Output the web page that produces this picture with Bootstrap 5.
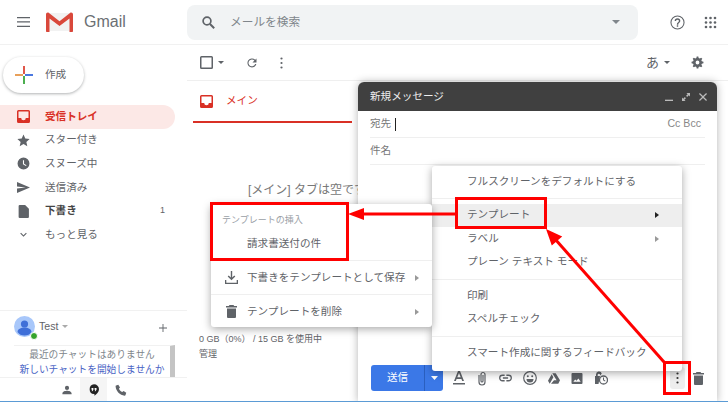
<!DOCTYPE html>
<html lang="ja">
<head>
  <meta charset="UTF-8">
  <meta name="viewport" content="width=device-width, initial-scale=1.0">
  <link href="https://cdn.jsdelivr.net/npm/bootstrap@5.3.0/dist/css/bootstrap.min.css" rel="stylesheet">
  <title>Gmail</title>
  <style>
    html, body { height: 100%; overflow: hidden; }
    body { font-family: "Liberation Sans", "Noto Sans CJK JP", sans-serif; color: #5f6368; font-size: 10.6px; background: #fff; }
    svg { display: block; flex: none; fill: currentColor; }
    .page { width: 728px; height: 402px; position: relative; border-bottom: 1px solid #5b9bd5; overflow: hidden; }
    .topbar { height: 45px; border-bottom: 1px solid #f1f1f1; }
    .burger { width: 46px; padding-left: 17px; }
    .gm-word { font-size: 16px; color: #6b6f73; margin-left: 11px; width: 103px; }
    .search { width: 451px; height: 35px; background: #f1f3f4; border-radius: 8px; padding: 0 18px 0 15px; font-size: 11.7px; color: #80868b; }
    .search-text { margin-left: 15px; }
    .top-right { margin-left: 31px; gap: 18px; color: #5f6368; }
    .side { width: 187px; height: 356px; }
    .compose-btn { width: 81px; height: 36px; margin: 12px 0 12px 3px; border-radius: 18px; box-shadow: 0 1px 3px rgba(60,64,67,.4); padding-left: 12px; gap: 12px; }
    .nav-line { width: 175px; height: 23.6px; padding-left: 17px; border-radius: 0 12px 12px 0; gap: 15px; color: #5f6368; }
    .nav-line.on { background: #fce8e6; color: #d93025; font-weight: 700; }
    .nav-line b { color: #444; }
    .nav-count { margin-left: auto; margin-right: 10px; font-size: 9px; }
    .chat-head { margin-top: auto; border-top: 1px solid #f1f1f1; height: 35px; padding: 5px 20px 0 14px; }
    .avatar { width: 21px; height: 21px; position: relative; }
    .dot-on { position: absolute; right: -3px; bottom: -3px; width: 8px; height: 8px; background: #34a32b; border-radius: 50%; border: 1px solid #fff; }
    .chat-name { margin-left: 4px; margin-top: 3px; }
    .chat-plus { margin-top: 8px; }
    .chat-none { height: 32px; margin-left: 14px; width: 161px; border-right: 5px solid #c4c4c4; border-top: 1px solid #f1f1f1; font-size: 9.7px; line-height: 15px; text-align: center; color: #80868b; white-space: nowrap; padding-top: 1px; }
    .chat-none a { color: #4a64c5; text-decoration: none; display: block; }
    .chat-tabs { height: 24px; border-top: 1px solid #f1f1f1; }
    .chat-tab { width: 27px; height: 24px; }
    .chat-tab.on { background: #f5f5f5; color: #222; }
    .mainpane { flex: 1; min-width: 0; }
    .tools { height: 36px; border-bottom: 1px solid #efefef; padding: 0 24px 0 13px; }
    .tools .t-caret { margin-left: 5px; }
    .tools .t-refresh { margin-left: 22px; }
    .tools .t-dots { margin-left: 22px; }
    .tools .t-lang { margin-left: auto; font-size: 13px; }
    .tools .t-gear { margin-left: 21px; }
    .tabline { width: 159px; height: 42px; margin-left: 6px; border-bottom: 2px solid #d93025; padding-left: 7px; gap: 13px; color: #d93025; }
    .empty-note { margin: 58px 0 0 61px; font-size: 12px; white-space: nowrap; color: #777; }
    .usage { position: absolute; left: 199px; top: 332px; font-size: 9px; line-height: 15px; }
    .cwin { position: absolute; left: 358px; top: 82px; width: 359px; height: 320px; background: #fff; border-radius: 6px 6px 0 0; box-shadow: 0 0 8px rgba(0,0,0,.3); }
    .cwin-head { height: 29px; background: #404040; color: #eee; border-radius: 6px 6px 0 0; padding: 0 10px 0 12px; }
    .cwin-head .ctl { gap: 9px; color: #bbb; }
    .field { height: 27px; margin: 0 12px; border-bottom: 1px solid #efefef; color: #777; }
    .cc-links { margin-left: auto; margin-right: 4px; color: #888; }
    .caretline { width: 1px; height: 13px; background: #222; margin-left: 4px; }
    .cwin-foot { position: absolute; left: 13px; right: 13px; top: 283px; height: 26px; }
    .send { width: 72px; height: 26px; background: #3b78e7; border-radius: 3px; color: #fff; }
    .send-l { flex: 1; border-right: 1px solid #2a5fbf; }
    .send-r { width: 18px; }
    .foot-icons { margin-left: 10px; gap: 11px; }
    .more-hover { margin-left: auto; width: 15px; height: 22px; background: #eee; border-radius: 3px; color: #333; }
    .pop { position: absolute; background: #fff; border-radius: 3px; box-shadow: 0 2px 8px rgba(0,0,0,.35); color: #5f6368; }
    .pop-main { left: 432px; top: 166px; width: 250px; height: 205px; padding-top: 4px; }
    .pop-sub { left: 211px; top: 204px; width: 221px; height: 123px; }
    .it { height: 23.5px; padding: 0 23px 0 35px; white-space: nowrap; }
    .it.hover { background: #eee; }
    .tri { margin-left: auto; width: 0; height: 0; border-left: 4px solid #999; border-top: 3px solid transparent; border-bottom: 3px solid transparent; }
    .it.hover .tri { border-left-color: #222; }
    .sep { height: 1px; background: #efefef; margin: 4.5px 0; }
    .sub-head { font-size: 9px; color: #9aa0a6; padding: 10px 0 0 11px; height: 27px; }
    .sub-it { height: 33px; padding: 0 13px 0 14px; gap: 9px; white-space: nowrap; }
    .sub-pick { height: 29px; padding: 0 0 4px 36px; }
    .sub-line { height: 1px; background: #efefef; }
    .mark-box { position: absolute; border: 3px solid #f00; }
    .mark-sub { left: 210px; top: 202px; width: 139px; height: 59px; }
    .mark-tpl { left: 455px; top: 197px; width: 92px; height: 32px; }
    .mark-more { left: 663px; top: 361px; width: 28px; height: 34px; }
    .arrows { position: absolute; left: 0; top: 0; }
  </style>
</head>
<body>
<div class="page">
  <!-- header -->
  <div class="topbar d-flex align-items-center">
    <div class="burger"><svg width="13" height="10" viewBox="0 0 13 10"><path d="M0 0h13v1.300H0zM0 4.300h13v1.300H0zM0 8.700h13V10H0z"/></svg></div>
    <svg width="27" height="20" viewBox="0 0 27 20">
      <path d="M1 1h25v18H1z" fill="#f2f2f2"/>
      <path d="M3 2l10.500 8L24 2v3l-10.500 8L3 5z" fill="#d8d8d8"/>
      <path d="M0 2.500C0 1 1.500 0 3 1l10.500 8.200L24 1c1.500-1 3 0 3 1.500V19c0 .6-.4 1-1 1h-2.500V6.500l-10 7.500-10-7.500V20H1c-.6 0-1-.4-1-1z" fill="#d9483b"/>
    </svg>
    <div class="gm-word">Gmail</div>
    <div class="search d-flex align-items-center">
      <svg width="13" height="13" viewBox="0 0 13 13"><circle cx="5" cy="5" r="3.900" fill="none" stroke="#5f6368" stroke-width="1.700"/><path d="M8 8l4.200 4.200" stroke="#5f6368" stroke-width="2" fill="none"/></svg>
      <span class="search-text">メールを検索</span>
      <svg class="ms-auto" width="8" height="4" viewBox="0 0 8 4"><path d="M0 0h8L4 4z"/></svg>
    </div>
    <div class="top-right d-flex align-items-center">
      <svg width="17" height="17" viewBox="0 0 24 24"><path d="M11 18h2v-2h-2zm1-16a10 10 0 1 0 0 20 10 10 0 0 0 0-20zm0 18.500a8.500 8.500 0 1 1 0-17 8.500 8.500 0 0 1 0 17zM12 6a4 4 0 0 0-4 4h2a2 2 0 1 1 4 0c0 2-3 1.800-3 5h2c0-2.300 3-2.500 3-5a4 4 0 0 0-4-4z"/></svg>
      <svg width="13" height="13" viewBox="0 0 13 13"><g><circle cx="2" cy="2" r="1.300"/><circle cx="6.500" cy="2" r="1.300"/><circle cx="11" cy="2" r="1.300"/><circle cx="2" cy="6.500" r="1.300"/><circle cx="6.500" cy="6.500" r="1.300"/><circle cx="11" cy="6.500" r="1.300"/><circle cx="2" cy="11" r="1.300"/><circle cx="6.500" cy="11" r="1.300"/><circle cx="11" cy="11" r="1.300"/></g></svg>
    </div>
  </div>

  <div class="d-flex">
    <!-- sidebar -->
    <div class="side d-flex flex-column">
      <div class="compose-btn d-flex align-items-center">
        <svg width="18" height="18" viewBox="0 0 18 18"><path d="M8 0h2v8H8z" fill="#e0574a"/><path d="M10 8h8v2h-8z" fill="#4a78e0"/><path d="M8 10h2v8H8z" fill="#4caf50"/><path d="M0 8h8v2H0z" fill="#e8a05a"/></svg>
        <span>作成</span>
      </div>
      <div class="nav-line on d-flex align-items-center">
        <svg width="13" height="13" viewBox="0 0 13 13"><path d="M1.500 0h10A1.500 1.500 0 0 1 13 1.500v10a1.500 1.500 0 0 1-1.500 1.500h-10A1.500 1.500 0 0 1 0 11.500v-10A1.500 1.500 0 0 1 1.500 0zm0 1.500V8h2.700a2.300 2.300 0 0 0 4.600 0h2.700V1.500z"/></svg>
        <span>受信トレイ</span>
      </div>
      <div class="nav-line d-flex align-items-center">
        <svg width="13" height="13" viewBox="0 0 24 24"><path d="M12 1l3.300 7.400 8 .8-6 5.400 1.700 7.900-7-4.100-7 4.100 1.700-7.900-6-5.400 8-.8z"/></svg>
        <span>スター付き</span>
      </div>
      <div class="nav-line d-flex align-items-center">
        <svg width="13" height="13" viewBox="0 0 24 24"><path d="M12 1a11 11 0 1 0 0 22 11 11 0 0 0 0-22zm4.500 15.800L11 13.500V6h2v6.400l4.600 2.700z"/></svg>
        <span>スヌーズ中</span>
      </div>
      <div class="nav-line d-flex align-items-center">
        <svg width="13" height="13" viewBox="0 0 24 24"><path d="M0 22l24-10L0 2v8l16 2-16 2z"/></svg>
        <span>送信済み</span>
      </div>
      <div class="nav-line d-flex align-items-center">
        <svg width="13" height="13" viewBox="0 0 24 24"><path d="M5 0h10l7 7v15a2 2 0 0 1-2 2H5a2 2 0 0 1-2-2V2a2 2 0 0 1 2-2z"/></svg>
        <b>下書き</b>
        <span class="nav-count">1</span>
      </div>
      <div class="nav-line d-flex align-items-center">
        <svg width="13" height="13" viewBox="0 0 24 24"><path d="M7.400 8.600L12 13.200l4.600-4.600L18 10l-6 6-6-6z"/></svg>
        <span>もっと見る</span>
      </div>

      <div class="chat-head d-flex align-items-start">
        <div class="avatar">
          <svg width="21" height="21" viewBox="0 0 21 21"><circle cx="10.500" cy="10.500" r="10.500" fill="#a8c7fa"/><circle cx="10.500" cy="8" r="3.600" fill="#3f6fd8"/><path d="M3.500 16c0-3 3.500-4.500 7-4.500s7 1.500 7 4.500c-1.500 2.500-4 3.500-7 3.500s-5.500-1-7-3.500z" fill="#3f6fd8"/></svg>
          <span class="dot-on"></span>
        </div>
        <span class="chat-name d-flex align-items-center gap-1">Test <svg width="6" height="3" viewBox="0 0 6 3"><path d="M0 0h6L3 3z" fill="#aaa"/></svg></span>
        <svg class="chat-plus ms-auto" width="8" height="8" viewBox="0 0 9 9"><path d="M4 0h1v4h4v1H5v4H4V5H0V4h4z"/></svg>
      </div>
      <div class="chat-none">最近のチャットはありません<a href="#">新しいチャットを開始しませんか</a></div>
      <div class="chat-tabs d-flex justify-content-center">
        <div class="chat-tab d-flex align-items-center justify-content-center">
          <svg width="10" height="10" viewBox="0 0 24 24"><path d="M12 12a5 5 0 1 0 0-10 5 5 0 0 0 0 10zm0 2c-4 0-11 2-11 6v2h22v-2c0-4-7-6-11-6z"/></svg>
        </div>
        <div class="chat-tab on d-flex align-items-center justify-content-center">
          <svg width="10" height="12" viewBox="0 0 12 14"><path d="M6 0a6 6 0 0 1 6 6c0 3.500-3 6-5.500 8v-2.100H6A6 6 0 0 1 6 0z"/><path d="M3 4.500h2.300v2.300L4 8.500H3.200l.6-1.700H3zM6.700 4.500H9v2.300L7.700 8.500h-.8l.6-1.700h-.8z" fill="#fff"/></svg>
        </div>
        <div class="chat-tab d-flex align-items-center justify-content-center">
          <svg width="12" height="12" viewBox="0 0 24 24"><path d="M6.600 1.500L10 6.800 7.800 9.500c1.400 2.800 3.900 5.300 6.700 6.700l2.700-2.200 5.300 3.400-1.600 5c-.3.600-1 1-1.700.9C9.700 22 2 14.300 1.200 4.800c-.1-.7.300-1.400.9-1.700z"/></svg>
        </div>
      </div>
    </div>

    <!-- mail list -->
    <div class="mainpane">
      <div class="tools d-flex align-items-center">
        <svg width="13" height="13" viewBox="0 0 13 13"><path d="M1.500 0h10A1.500 1.500 0 0 1 13 1.500v10a1.500 1.500 0 0 1-1.500 1.500h-10A1.500 1.500 0 0 1 0 11.500v-10A1.500 1.500 0 0 1 1.500 0zm0 1.400v10.200h10V1.400z"/></svg>
        <svg class="t-caret" width="6" height="3" viewBox="0 0 6 3"><path d="M0 0h6L3 3z"/></svg>
        <svg class="t-refresh" width="12" height="12" viewBox="0 0 24 24"><path d="M18.400 5.600A9 9 0 1 0 20.700 14h-2.400a6.800 6.800 0 1 1-1.500-6.800L13 11h8V3z"/></svg>
        <svg class="t-dots" width="3" height="12" viewBox="0 0 3 12"><circle cx="1.500" cy="1.500" r="1.100"/><circle cx="1.500" cy="6" r="1.100"/><circle cx="1.500" cy="10.500" r="1.100"/></svg>
        <span class="t-lang">あ</span>
        <svg class="t-caret" width="6" height="3" viewBox="0 0 6 3"><path d="M0 0h6L3 3z"/></svg>
        <svg class="t-gear" width="13" height="13" viewBox="0 0 24 24"><path d="M23 13.500v-3l-3-.6a8 8 0 0 0-.9-2.100l1.800-2.500-2.200-2.200-2.500 1.700a8 8 0 0 0-2.100-.9L13.500 1h-3l-.6 2.900a8 8 0 0 0-2.100.9L5.300 3.100 3.100 5.300l1.700 2.500a8 8 0 0 0-.9 2.100L1 10.500v3l2.900.6c.2.700.5 1.400.9 2.100l-1.700 2.500 2.200 2.200 2.500-1.700c.7.400 1.400.7 2.100.9l.6 2.900h3l.6-2.900c.7-.2 1.400-.5 2.100-.9l2.500 1.700 2.200-2.200-1.800-2.500c.4-.7.700-1.400.9-2.100zM12 15.500a3.500 3.500 0 1 1 0-7 3.500 3.500 0 0 1 0 7z"/></svg>
      </div>
      <div class="tabline d-flex align-items-center">
        <svg width="13" height="13" viewBox="0 0 13 13"><path d="M1.500 0h10A1.500 1.500 0 0 1 13 1.500v10a1.500 1.500 0 0 1-1.500 1.500h-10A1.500 1.500 0 0 1 0 11.500v-10A1.500 1.500 0 0 1 1.500 0zm0 1.500V8h2.700a2.300 2.300 0 0 0 4.600 0h2.700V1.500z"/></svg>
        <span>メイン</span>
      </div>
      <div class="empty-note">[メイン] タブは空です</div>
    </div>
  </div>

  <div class="usage">0 GB（0%） / 15 GB を使用中<br>管理</div>

  <!-- compose window -->
  <div class="cwin">
    <div class="cwin-head d-flex align-items-center">
      <span>新規メッセージ</span>
      <div class="ctl ms-auto d-flex align-items-center">
        <svg width="8" height="8" viewBox="0 0 9 9"><path d="M0 7.500h9V9H0z"/></svg>
        <svg width="8" height="8" viewBox="0 0 9 9"><path d="M5 0h4v4L7.600 2.600 5.800 4.400 4.600 3.200l1.800-1.800zM0 9V5l1.400 1.400 1.800-1.800 1.200 1.200-1.800 1.800L4 9z"/></svg>
        <svg width="8" height="8" viewBox="0 0 9 9"><path d="M1 0l3.500 3.500L8 0l1 1-3.500 3.500L9 8l-1 1-3.500-3.500L1 9 0 8l3.500-3.500L0 1z"/></svg>
      </div>
    </div>
    <div class="field d-flex align-items-center"><span>宛先</span><span class="caretline"></span><span class="cc-links">Cc Bcc</span></div>
    <div class="field d-flex align-items-center"><span>件名</span></div>
    <div class="cwin-foot d-flex align-items-center">
      <div class="send d-flex">
        <div class="send-l d-flex align-items-center justify-content-center">送信</div>
        <div class="send-r d-flex align-items-center justify-content-center"><svg width="7" height="4" viewBox="0 0 7 4"><path d="M0 0h7L3.500 4z" fill="#fff"/></svg></div>
      </div>
      <div class="foot-icons d-flex align-items-center">
        <svg width="12" height="14" viewBox="0 0 12 14"><path d="M5 0h2l4 10H9.200l-.8-2H3.600l-.8 2H1zm-.7 6.300h3.400L6 2zM0 12h12v1.500H0z"/></svg>
        <svg width="12" height="15" viewBox="0 0 12 15"><path d="M3 4v7a3 3 0 0 0 6 0V3.500a2 2 0 0 0-4 0V10a1 1 0 0 0 2 0V4" fill="none" stroke="currentColor" stroke-width="1.200"/></svg>
        <svg width="13" height="8" viewBox="0 0 15 9"><path d="M6.500 1.300H4a3.200 3.200 0 0 0 0 6.400h2.500M8.500 1.300H11a3.200 3.200 0 0 1 0 6.400H8.500M4.500 4.500h6" fill="none" stroke="currentColor" stroke-width="1.500"/></svg>
        <svg width="14" height="14" viewBox="0 0 14 14"><circle cx="7" cy="7" r="6.300" fill="none" stroke="currentColor" stroke-width="1.200"/><circle cx="4.800" cy="5.200" r="1"/><circle cx="9.200" cy="5.200" r="1"/><path d="M3.500 8h7a3.500 3.500 0 0 1-7 0z"/></svg>
        <svg width="12" height="11" viewBox="0 0 14 12"><path d="M5 0h4l5 8H10zM4.300 1l2 3.500L2 12 0 8.500zM7 8h7l-2 4H3.500z"/></svg>
        <svg width="12" height="11" viewBox="0 0 12 12"><path d="M1 0h10a1 1 0 0 1 1 1v10a1 1 0 0 1-1 1H1a1 1 0 0 1-1-1V1a1 1 0 0 1 1-1zm1 9.500h8L7.500 6 5.500 8.500 4 7z"/></svg>
        <svg width="14" height="14" viewBox="0 0 14 14"><path d="M1 13V5h1V3.500a3 3 0 0 1 5.800-1L6 4.800V3.500a1.200 1.200 0 0 0-2.300 0V5H6L4.500 13z"/><circle cx="9.500" cy="9" r="4" fill="none" stroke="currentColor" stroke-width="1.300"/><path d="M9 6.500h1v2.300l1.500 1-.5.700-2-1.300z"/></svg>
      </div>
      <div class="more-hover d-flex align-items-center justify-content-center">
        <svg width="3" height="12" viewBox="0 0 3 12"><circle cx="1.500" cy="1.500" r="1.100"/><circle cx="1.500" cy="6" r="1.100"/><circle cx="1.500" cy="10.500" r="1.100"/></svg>
      </div>
      <svg class="ms-2" width="11" height="13" viewBox="0 0 11 13"><path d="M3.500 0h4l.7 1H11v1.500H0V1h2.800zM1 3.500h9V12a1 1 0 0 1-1 1H2a1 1 0 0 1-1-1z"/></svg>
    </div>
  </div>

  <!-- more options menu -->
  <div class="pop pop-main">
    <div class="it d-flex align-items-center">フルスクリーンをデフォルトにする</div>
    <div class="sep"></div>
    <div class="it hover d-flex align-items-center">テンプレート<span class="tri"></span></div>
    <div class="it d-flex align-items-center">ラベル<span class="tri"></span></div>
    <div class="it d-flex align-items-center">プレーン テキスト モード</div>
    <div class="sep"></div>
    <div class="it d-flex align-items-center">印刷</div>
    <div class="it d-flex align-items-center">スペルチェック</div>
    <div class="sep"></div>
    <div class="it d-flex align-items-center">スマート作成に関するフィードバック</div>
  </div>

  <!-- template submenu -->
  <div class="pop pop-sub">
    <div class="sub-head">テンプレートの挿入</div>
    <div class="sub-pick d-flex align-items-center">請求書送付の件</div>
    <div class="sub-line"></div>
    <div class="sub-it d-flex align-items-center">
      <svg width="13" height="13" viewBox="0 0 13 13"><path d="M5.800 0h1.400v6.500l2.100-2.100 1 1-3.800 3.800-3.800-3.800 1-1 2.100 2.100zM0 9h1.300v2.700h10.400V9H13v4H0z"/></svg>
      <span>下書きをテンプレートとして保存</span><span class="tri"></span>
    </div>
    <div class="sub-line"></div>
    <div class="sub-it d-flex align-items-center">
      <svg width="13" height="13" viewBox="0 0 11 13"><path d="M3.500 0h4l.7 1H11v1.500H0V1h2.800zM1 3.500h9V12a1 1 0 0 1-1 1H2a1 1 0 0 1-1-1z"/></svg>
      <span>テンプレートを削除</span><span class="tri"></span>
    </div>
  </div>

  <!-- red annotations -->
  <svg class="arrows" width="728" height="402" viewBox="0 0 728 402">
    <path d="M456 214H358" stroke="#f00" stroke-width="3" fill="none"/>
    <path d="M348 214l16-6v12z" fill="#f00"/>
    <path d="M664 362L555 239" stroke="#f00" stroke-width="3" fill="none"/>
    <path d="M546 229l5.800 16.600 10.400-9.200z" fill="#f00"/>
  </svg>
  <div class="mark-box mark-sub"></div>
  <div class="mark-box mark-tpl"></div>
  <div class="mark-box mark-more"></div>
</div>
<script src="https://cdn.jsdelivr.net/npm/bootstrap@5.3.0/dist/js/bootstrap.bundle.min.js"></script>
</body>
</html>
